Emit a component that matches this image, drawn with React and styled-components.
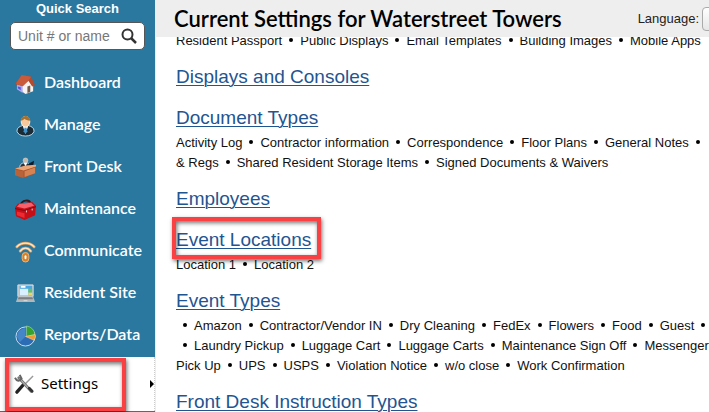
import React from 'react'
import styled, { createGlobalStyle, css } from 'styled-components'

const GlobalStyle = createGlobalStyle`
    * {
        box-sizing: border-box;
    }
    body {
        margin: 0;
        background: #fff;
        font-family: 'Liberation Sans', Arial, sans-serif;
    }
`

const Layout = styled.div`
    display: flex;
    height: 100vh;
    overflow: hidden;
`

const Sidebar = styled.aside`
    flex: none;
    display: flex;
    flex-direction: column;
    width: 155px;
    background: #2a789f;
`

const Search = styled.form`
    padding: 2px 10px 0;
    label {
        display: block;
        margin-bottom: 6px;
        color: #fff;
        font-size: 13px;
        font-weight: bold;
        line-height: 14px;
        text-align: center;
    }
`

const SearchBox = styled.div`
    display: flex;
    align-items: center;
    height: 28px;
    padding: 0 7px;
    background: #fff;
    border: 1px solid #565656;
    border-radius: 5px;
    input {
        flex: 1;
        min-width: 0;
        padding: 0;
        border: 0;
        outline: 0;
        background: none;
        font: 14px 'Liberation Sans', Arial, sans-serif;
        &::placeholder {
            color: #777;
        }
    }
    button {
        display: flex;
        padding: 0;
        border: 0;
        background: none;
    }
`

const Menu = styled.nav`
    display: flex;
    flex-direction: column;
    padding-top: 12px;
`

const highlight = css`
    border: 4px solid #f94144;
    box-shadow: 1px 2px 4px rgba(0, 0, 0, 0.55), inset 1px 2px 4px rgba(0, 0, 0, 0.55);
`

const MenuLink = styled.a`
    display: flex;
    align-items: center;
    gap: 8px;
    height: 42px;
    padding-left: 15px;
    color: #fff;
    font: 600 16px/20px Lato, sans-serif;
    text-decoration: none;
    svg {
        flex: none;
        margin-top: 2px;
    }
    span {
        padding-bottom: 2px;
    }
`

const ActiveRow = styled.div`
    display: flex;
    align-items: center;
    justify-content: space-between;
    height: 54px;
    margin-top: 1px;
    padding-left: 5px;
    background: #fff;
    border-right: 1px dotted #ccc;
`

const ActiveLink = styled.a`
    display: flex;
    align-items: center;
    gap: 6px;
    width: 121px;
    height: 53px;
    padding-left: 5px;
    color: #000;
    font: 15px/20px 'Noto Sans', sans-serif;
    text-decoration: none;
    ${highlight}
    span {
        padding-bottom: 2px;
    }
`

const Arrow = styled.span`
    border: 4px solid transparent;
    border-left-color: #000;
    border-right: 0;
`

const Main = styled.main`
    flex: 1;
    min-width: 0;
    overflow: hidden;
    border-left: 1px solid #e4eef5;
`

const Header = styled.header`
    position: relative;
    z-index: 1;
    display: flex;
    align-items: center;
    gap: 76px;
    height: 37px;
    padding-left: 18px;
    overflow: hidden;
    background: #eee;
    white-space: nowrap;
    h1 {
        margin: 0;
        font: 600 22px/36px Lato, sans-serif;
    }
`

const Language = styled.label`
    display: flex;
    align-items: center;
    gap: 3px;
    color: #222;
    font-size: 13px;
    select {
        width: 100px;
        height: 24px;
        padding-left: 4px;
        border: 1px solid #aaa;
        border-radius: 4px;
        background: linear-gradient(#fff, #e6e6e6);
        font: 13px 'Liberation Sans', Arial, sans-serif;
    }
`

const Content = styled.div`
    margin-top: -6px;
    padding-left: 20px;
`

const Section = styled.section`
    margin-bottom: 14px;
`

const Heading = styled.h2`
    margin: 0;
    padding-bottom: 3px;
    font-size: 19px;
    font-weight: normal;
    line-height: 24px;
    a {
        position: relative;
        color: #1f5591;
        text-decoration: underline;
        text-decoration-thickness: 1px;
        text-underline-offset: 2px;
    }
`

const Frame = styled.span`
    position: absolute;
    inset: -12px -10px -9px -4px;
    ${highlight}
`

const Items = styled.div`
    display: flex;
    gap: 7px;
    height: 20px;
    color: #111;
    font-size: 13px;
    line-height: 20px;
    white-space: nowrap;
    a {
        color: inherit;
        text-decoration: none;
    }
`

const Dot = styled.span`
    flex: none;
    width: 4px;
    height: 4px;
    margin-top: 7px;
    border-radius: 50%;
    background: #000;
`

const icons = {
    home: (
        <>
            <path d="M4 12l8-7 7 6v8l-8 3-7-5z" fill="#f6f3f0" />
            <path d="M1 10L7 2l10 2 4 9-3 1-4-6-7 6-6-2z" fill="#b64a2c" />
            <path d="M7 2l10 2-3 4-6 6-7-3z" fill="#c95a3a" />
            <path d="M2 12l6 2v7l-6-4z" fill="#a9a8ee" />
            <path d="M3 14l3 1v3l-3-2z" fill="#5a55d8" />
            <path d="M13 14l3-1v7l-3 1z" fill="#765a49" />
        </>
    ),
    manage: (
        <>
            <path d="M2 17c0-4 3-5 6-6h6c3 1 6 2 6 6-1 3-4 5-9 5s-8-2-9-5z" fill="#1c2c36" stroke="#cbdce5" />
            <path d="M8 11l3 9 3-9z" fill="#fff" />
            <path d="M10 13h2l1 4-2 3-2-3z" fill="#3e94cf" />
            <ellipse cx="11" cy="7" rx="4.5" ry="5.5" fill="#f6c89b" stroke="#fff0df" />
            <path d="M6 6c0-4 3-5 6-5 3 1 4 3 4 5-3 0-5-1-6-2-1 1-2 2-4 2z" fill="#a8712f" />
        </>
    ),
    desk: (
        <>
            <path d="M5 11c0-4 3-5 6-5s5 1 5 5z" fill="#26343e" stroke="#d5dde2" />
            <path d="M9 6h4l-2 4z" fill="#fff" />
            <circle cx="11" cy="3.500" r="2.500" fill="#c9b7a6" stroke="#e3e8ea" strokeWidth=".5" />
            <path d="M14 7l6-3-1 6-4 1z" fill="#111c2b" />
            <path d="M0 12l9-2 13-1v8l-13 5-9-3z" fill="#a9542d" />
            <path d="M0 12l11-3 11-1v2l-13 4z" fill="#eba678" />
            <path d="M0 13l9 2v7l-9-3z" fill="#b9633a" />
            <path d="M10 15l11-4v6l-11 4z" fill="#d68354" />
        </>
    ),
    toolbox: (
        <>
            <path d="M6 6c1-5 9-6 10-2" fill="none" stroke="#34191a" strokeWidth="2" />
            <path d="M0 9l3-4 15-2 4 4-1 10-11 5-9-4z" fill="#c80e17" />
            <path d="M2 8l3-3 12-1 3 3-10 3z" fill="#f5606a" />
            <path d="M0 10l10 2 12-4" fill="none" stroke="#7c0a12" />
            <path d="M2 13l8 2v5l-8-3z" fill="#ee2a33" />
            <path d="M12 12v2M18 10v2" stroke="#ddd" />
        </>
    ),
    wifi: (
        <>
            <g fill="none" stroke="#e3a05a" strokeWidth="3" strokeLinecap="round">
                <path d="M2 6c5-5 13-5 18 0M5.500 10.500c3-4 8-4 11 0" />
            </g>
            <g fill="none" stroke="#ffe9cd" strokeWidth="1.300" strokeLinecap="round">
                <path d="M2 6c5-5 13-5 18 0M5.500 10.500c3-4 8-4 11 0" />
            </g>
            <rect x="7.500" y="12" width="7" height="10" rx="3.500" fill="#d98024" stroke="#f0b775" />
            <rect x="10" y="15" width="2" height="4" rx="1" fill="#fff" />
        </>
    ),
    laptop: (
        <>
            <path d="M3 2h16v12H3z" fill="#b9c0c4" stroke="#dce1e4" />
            <path d="M5 3h13v10H5z" fill="#4aa6e4" />
            <path d="M5 6h9v7H5z" fill="#d8f0ff" />
            <path d="M6 3h5v2H6z" fill="#fff" />
            <path d="M14 6h4v4h-4z" fill="#62c266" />
            <path d="M14 10h4v3h-4z" fill="#f0d65b" />
            <path d="M3 14h16l2 6H1z" fill="#b4b6b8" />
            <path d="M4 15h14l1 2H3z" fill="#7c8083" />
            <path d="M9 18h4v1H9z" fill="#ddd" />
        </>
    ),
    pie: (
        <>
            <circle cx="11" cy="12" r="10" fill="#2b6cb4" stroke="#c7dff2" />
            <path d="M2 12a9 9 0 0 1 9-9v9l-6 6z" fill="#4486c8" />
            <path d="M12 11V1a10 10 0 0 1 9 9l-9 2z" fill="#37a32e" stroke="#c6e8bc" strokeWidth=".5" />
            <path d="M11 12l10-2c1 2 0 4-1 6z" fill="#ef9a32" stroke="#ffe0ac" strokeWidth=".5" />
        </>
    ),
    tools: (
        <>
            <path d="M20 3L10 13" stroke="#999" strokeWidth="1.500" />
            <path d="M10 12l-7 8" stroke="#222" strokeWidth="3.500" strokeLinecap="round" />
            <path d="M5 5l13 14" stroke="#777" strokeWidth="3" strokeLinecap="round" />
            <path d="M6 6l11 12" stroke="#ccc" />
            <path d="M1 5c2 4 5 4 7 1L6 2" fill="none" stroke="#666" strokeWidth="2" />
            <path d="M16 16l3 3" stroke="#333" strokeWidth="3" strokeLinecap="round" />
        </>
    ),
}

const menu = [
    ['home', 'Dashboard'],
    ['manage', 'Manage'],
    ['desk', 'Front Desk'],
    ['toolbox', 'Maintenance'],
    ['wifi', 'Communicate'],
    ['laptop', 'Resident Site'],
    ['pie', 'Reports/Data'],
]

// an empty string leaves a bullet at the start or the end of a line
const sections = [
    { lines: [['Resident Passport', 'Public Displays', 'Email Templates', 'Building Images', 'Mobile Apps']] },
    { title: 'Displays and Consoles', lines: [] },
    {
        title: 'Document Types',
        lines: [
            ['Activity Log', 'Contractor information', 'Correspondence', 'Floor Plans', 'General Notes', ''],
            ['& Regs', 'Shared Resident Storage Items', 'Signed Documents & Waivers'],
        ],
    },
    { title: 'Employees', lines: [] },
    { title: 'Event Locations', framed: true, lines: [['Location 1', 'Location 2']] },
    {
        title: 'Event Types',
        lines: [
            ['', 'Amazon', 'Contractor/Vendor IN', 'Dry Cleaning', 'FedEx', 'Flowers', 'Food', 'Guest', ''],
            ['', 'Laundry Pickup', 'Luggage Cart', 'Luggage Carts', 'Maintenance Sign Off', 'Messenger'],
            ['Pick Up', 'UPS', 'USPS', 'Violation Notice', 'w/o close', 'Work Confirmation'],
        ],
    },
    { title: 'Front Desk Instruction Types', lines: [] },
]

function Icon({ name }) {
    return <svg width="21" height="22" viewBox="0 0 22 23" aria-hidden="true">{icons[name]}</svg>
}

function ItemLine({ items }) {
    return (
        <Items>
            {items.map((item, i) => (
                <React.Fragment key={i}>
                    {i > 0 && <Dot />}
                    {item ? <a href="#">{item}</a> : <span />}
                </React.Fragment>
            ))}
        </Items>
    )
}

export default function App() {
    return (
        <>
            <GlobalStyle />
            <Layout>
                <Sidebar>
                    <Search>
                        <label htmlFor="search">Quick Search</label>
                        <SearchBox>
                            <input id="search" placeholder="Unit # or name" />
                            <button type="button" aria-label="Search">
                                <svg width="16" height="16" viewBox="0 0 16 16" fill="none" stroke="#333">
                                    <circle cx="6.500" cy="6.500" r="5" strokeWidth="2" />
                                    <path d="M10 10l5 5" strokeWidth="2.500" />
                                </svg>
                            </button>
                        </SearchBox>
                    </Search>
                    <Menu>
                        {menu.map(([icon, label]) => (
                            <MenuLink key={icon} href="#">
                                <Icon name={icon} />
                                <span>{label}</span>
                            </MenuLink>
                        ))}
                        <ActiveRow>
                            <ActiveLink href="#">
                                <Icon name="tools" />
                                <span>Settings</span>
                            </ActiveLink>
                            <Arrow />
                        </ActiveRow>
                    </Menu>
                </Sidebar>
                <Main>
                    <Header>
                        <h1>Current Settings for Waterstreet Towers</h1>
                        <Language>
                            Language:
                            <select defaultValue="English">
                                <option>English</option>
                            </select>
                        </Language>
                    </Header>
                    <Content>
                        {sections.map(({ title, framed, lines }, i) => (
                            <Section key={i}>
                                {title && (
                                    <Heading>
                                        <a href="#">
                                            {title}
                                            {framed && <Frame />}
                                        </a>
                                    </Heading>
                                )}
                                {lines.map((items, n) => <ItemLine key={n} items={items} />)}
                            </Section>
                        ))}
                    </Content>
                </Main>
            </Layout>
        </>
    )
}
